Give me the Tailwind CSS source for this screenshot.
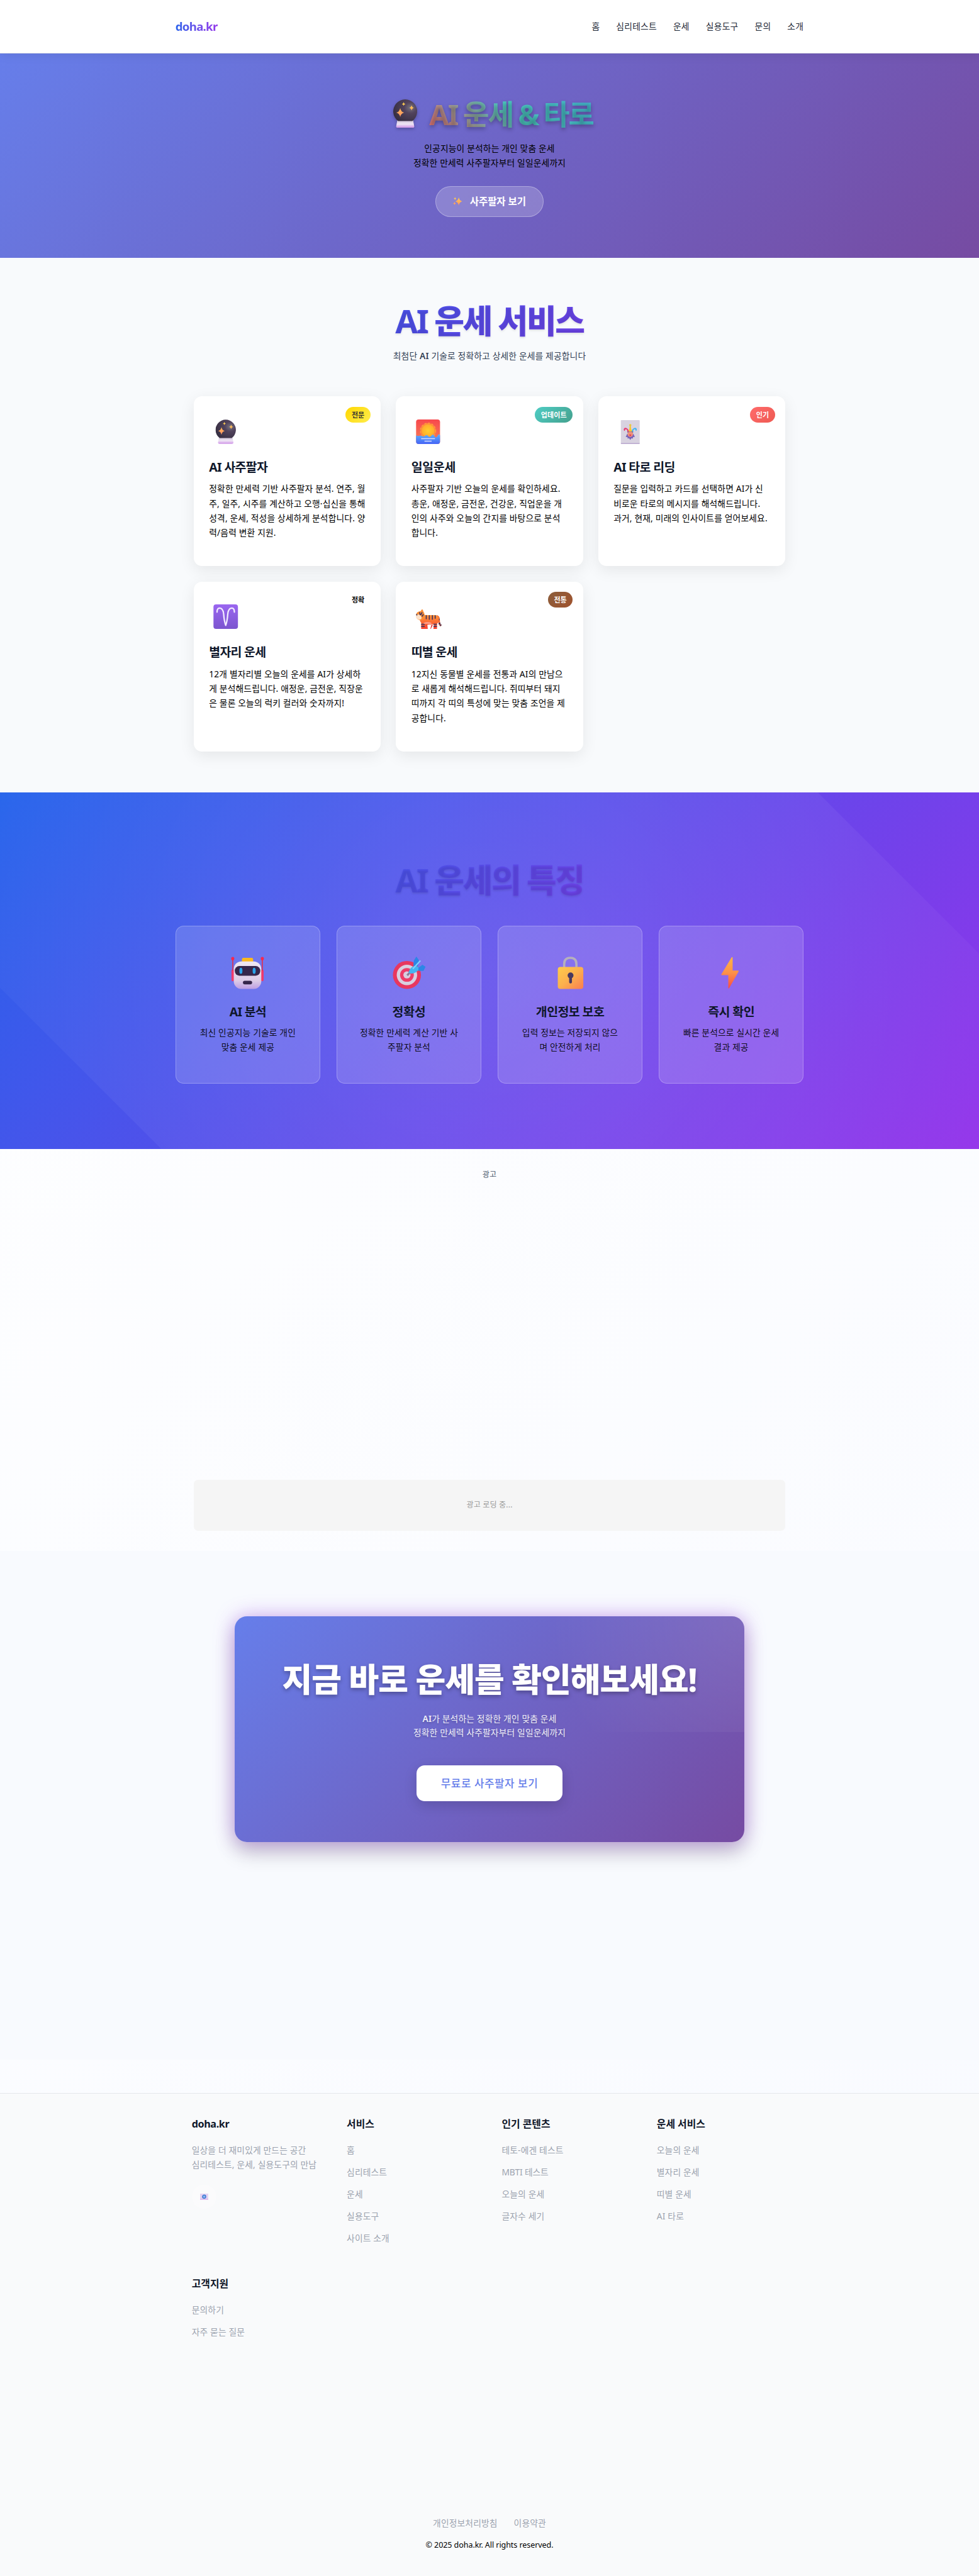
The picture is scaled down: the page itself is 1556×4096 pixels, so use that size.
<!DOCTYPE html>
<html lang="ko">
<head>
<meta charset="utf-8">
<title>AI 운세 &amp; 타로 - doha.kr</title>
<script src="https://cdn.jsdelivr.net/npm/@tailwindcss/browser@4"></script>
</head>
<body class="overflow-x-hidden bg-[#fafbfd]">
<svg width="0" height="0" class="absolute">
  <defs>
    <radialGradient id="orb" cx=".72" cy=".38" r=".75"><stop offset="0" stop-color="#77737f"/><stop offset=".35" stop-color="#51435c"/><stop offset="1" stop-color="#372f42"/></radialGradient>
    <linearGradient id="base" x1="0" y1="0" x2="0" y2="1"><stop offset="0" stop-color="#cfc4d8"/><stop offset=".5" stop-color="#efe6f5"/><stop offset="1" stop-color="#cd8fe6"/></linearGradient>
    <linearGradient id="gold" x1="0" y1="0" x2="0" y2="1"><stop offset="0" stop-color="#ffd34f"/><stop offset="1" stop-color="#ff9165"/></linearGradient>
    <linearGradient id="sky" x1="0" y1="0" x2="0" y2="1"><stop offset="0" stop-color="#f8484c"/><stop offset="1" stop-color="#f5835a"/></linearGradient>
    <linearGradient id="sea" x1="0" y1="0" x2="0" y2="1"><stop offset="0" stop-color="#5cb2ff"/><stop offset="1" stop-color="#4563f5"/></linearGradient>
    <radialGradient id="sun"><stop offset="0" stop-color="#ffce2e"/><stop offset="1" stop-color="#ffab2c"/></radialGradient>
    <linearGradient id="violet" x1="0" y1="0" x2="0" y2="1"><stop offset="0" stop-color="#9a66f0"/><stop offset="1" stop-color="#7c55cf"/></linearGradient>
    <linearGradient id="fur" x1="0" y1="0" x2="0" y2="1"><stop offset="0" stop-color="#ff9a3c"/><stop offset="1" stop-color="#f8402f"/></linearGradient>
    <linearGradient id="face" x1="0" y1="0" x2="0" y2="1"><stop offset="0" stop-color="#efe8f3"/><stop offset=".7" stop-color="#dccbe6"/><stop offset="1" stop-color="#bd9ee2"/></linearGradient>
    <linearGradient id="lock" x1="0" y1="0" x2="1" y2="1"><stop offset="0" stop-color="#ffcb4a"/><stop offset=".5" stop-color="#fbb04e"/><stop offset="1" stop-color="#fb7d50"/></linearGradient>
    <linearGradient id="bolt" x1="0" y1="0" x2="0" y2="1"><stop offset="0" stop-color="#ffb644"/><stop offset=".5" stop-color="#fd9149"/><stop offset="1" stop-color="#f84a45"/></linearGradient>
    <symbol id="crystal" viewBox="0 0 47 56">
      <path d="M8 41h31l2.3 12q0 3-3.500 3H9.200q-3.500 0-3.500-3z" fill="url(#base)"/>
      <path d="M9.500 42.500a23.500 23.500 0 1 1 28 0z" fill="url(#orb)"/>
      <path d="M13.700 17q1.300 7.500 7.700 9q-6.400 1.500-7.700 9q-1.300-7.500-7.700-9q6.400-1.500 7.700-9zM20.400 5.500q.6 3 3.400 3.600q-2.800.6-3.400 3.600q-.6-3-3.400-3.600q2.800-.6 3.400-3.600zM36 11.500q.8 4.300 4.600 5.200q-3.800.9-4.600 5.200q-.8-4.300-4.600-5.200q3.800-.9 4.600-5.200z" fill="url(#gold)"/>
    </symbol>
  </defs>
</svg>

<div class="[zoom:0.8104] w-full bg-[linear-gradient(135deg,#ffffff,#f8faff)] font-['Noto_Sans','Noto_Sans_CJK_KR',sans-serif] text-[17px] leading-[28.8px] tracking-[0.2px] text-black">

  <header class="relative z-10 h-[105px] border-b border-gray-200 bg-white shadow-[0_4px_20px_rgba(0,0,0,0.08)]">
    <div class="mx-auto flex h-full w-[1232px] items-center justify-between">
      <div class="bg-linear-to-r from-[#2563eb] to-[#9333ea] bg-clip-text pr-[2px] text-[23px] font-bold tracking-[-0.9px] text-transparent">doha.kr</div>
      <nav class="flex gap-8 whitespace-nowrap text-[#1f2937] tracking-[0.35px]">
        <a>홈</a><a>심리테스트</a><a>운세</a><a>실용도구</a><a>문의</a><a>소개</a>
      </nav>
    </div>
  </header>

  <section class="flex h-[401px] flex-col items-center bg-[linear-gradient(135deg,#667eea_0%,#764ba2_100%)] pt-[84.500px] text-center">
    <h1 class="flex h-[68px] items-center whitespace-nowrap bg-[linear-gradient(45deg,#ff6b6b_14%,#4ecdc4_60%,#45b7d1)] bg-clip-text pl-[15px] text-[56px] leading-[68px] font-bold tracking-[-2.4px] text-transparent [word-spacing:-2px] [text-shadow:0_4px_8px_rgba(0,0,0,0.3)]">
      <svg class="mr-[24px] h-[56px] w-[47px] drop-shadow-[0_3px_3px_rgba(0,0,0,0.25)]"><use href="#crystal"/></svg>AI 운세 &amp; 타로
    </h1>
    <p class="mt-[19px]">인공지능이 분석하는 개인 맞춤 운세<br>정확한 만세력 사주팔자부터 일일운세까지</p>
    <a class="mt-[31.100px] flex h-[61px] w-[212px] items-center justify-center rounded-full border border-white/30 bg-white/20 text-[19.200px] font-bold tracking-[-0.1px] text-white">
      <svg class="mr-[15px] size-[18px]" viewBox="0 0 18 18" fill="url(#gold)"><path d="M11.300 1q1.200 6.500 6.700 8q-5.500 1.500-6.700 8q-1.200-6.500-6.700-8q5.500-1.500 6.700-8zM4 .6q.5 2.300 2.600 2.900q-2.100.6-2.600 2.900q-.5-2.300-2.600-2.900q2.100-.6 2.600-2.900zM3 10q.5 2.500 2.900 3.100q-2.400.6-2.900 3.100q-.5-2.500-2.900-3.100q2.400-.6 2.900-3.100z"/></svg>
      사주팔자 보기
    </a>
  </section>

  <section class="h-[1049px] bg-[#f8fafc] pt-[85px]">
    <h2 class="mx-auto w-[1232px] bg-[linear-gradient(135deg,#2563eb,#9333ea)] bg-clip-text text-center text-[64px] leading-[77px] font-extrabold tracking-[-2.800px] text-transparent [word-spacing:-1px] [text-shadow:0_2px_4px_rgba(0,0,0,0.1)]"><span class="font-bold">AI</span> 운세 서비스</h2>
    <p class="mt-[15.500px] text-center text-[#334155]">최첨단 <span class="font-semibold">AI</span> 기술로 정확하고 상세한 운세를 제공합니다</p>
    <div class="mx-auto mt-[65.600px] grid w-[1160px] grid-cols-3 gap-[30px] whitespace-nowrap">

      <article class="relative h-[333px] rounded-2xl bg-white px-[30px] pt-[35px] shadow-[0_8px_30px_rgba(0,0,0,0.08)]">
        <span class="absolute top-5 right-5 rounded-full bg-[linear-gradient(135deg,#ffd700,#ffed4e)] px-3 text-[13.600px] leading-[31px] font-semibold tracking-normal text-[#333]">전문</span>
        <svg class="size-[66px]" viewBox="0 0 66 66"><use href="#crystal" x="13" y="10" width="40" height="48"/></svg>
        <h3 class="mt-[18px] text-[24px] leading-[38.400px] font-bold tracking-[-0.8px] text-[#0f172a]">AI 사주팔자</h3>
        <p class="mt-[9.300px]">정확한 만세력 기반 사주팔자 분석. 연주, 월<br>주, 일주, 시주를 계산하고 오행·십신을 통해<br>성격, 운세, 적성을 상세하게 분석합니다. 양<br>력/음력 변환 지원.</p>
      </article>

      <article class="relative h-[333px] rounded-2xl bg-white px-[30px] pt-[35px] shadow-[0_8px_30px_rgba(0,0,0,0.08)]">
        <span class="absolute top-5 right-5 rounded-full bg-[linear-gradient(135deg,#4ecdc4,#44a08d)] px-3 text-[13.600px] leading-[31px] font-semibold tracking-[0.1px] text-white">업데이트</span>
        <svg class="size-[66px]" viewBox="0 0 66 66">
          <rect x="9" y="10" width="47" height="48" rx="5" fill="url(#sky)"/>
          <circle cx="32.500" cy="32" r="15" fill="#ff8a3c" stroke="#ff9a3a" stroke-width="2" stroke-dasharray="4 3"/>
          <circle cx="32.500" cy="32" r="12.500" fill="url(#sun)"/>
          <path d="M9 41q3 2 6 1t6 .5 6-1 6 1 6-1 6 1 6-.5 5-1v12q0 5-5 5H14q-5 0-5-5z" fill="url(#sea)"/>
          <path d="M19 47.500h27M25.500 52.500h14" stroke="#d5dcff" stroke-width="2"/>
        </svg>
        <h3 class="mt-[18px] text-[24px] leading-[38.400px] font-bold tracking-[-0.4px] text-[#0f172a]">일일운세</h3>
        <p class="mt-[9.300px]">사주팔자 기반 오늘의 운세를 확인하세요.<br>총운, 애정운, 금전운, 건강운, 직업운을 개<br>인의 사주와 오늘의 간지를 바탕으로 분석<br>합니다.</p>
      </article>

      <article class="relative h-[333px] rounded-2xl bg-white px-[30px] pt-[35px] shadow-[0_8px_30px_rgba(0,0,0,0.08)]">
        <span class="absolute top-5 right-5 rounded-full bg-[linear-gradient(135deg,#ff6b6b,#ee5a52)] px-3 text-[13.600px] leading-[31px] font-semibold tracking-normal text-white">인기</span>
        <svg class="size-[66px]" viewBox="0 0 66 66">
          <rect x="14.500" y="11" width="37" height="47" rx="1.500" fill="#d8d2e0"/>
          <path d="M14.500 56h37v1q0 1-1.500 1H16q-1.500 0-1.500-1z" fill="#b9a7cf"/>
          <path d="M27 38h12l3 6-3.500.5-.5 3-2.500-1L33 50l-2.500-3.500-2.500 1-.5-3L24 44z" fill="#7a63b8"/>
          <path d="M27 35q1-5-2.500-6-2.500 0-2 3.500-3-.5-2-4.500 3-4 8 1l3 5z" fill="#e8386d"/>
          <path d="M39 35q-1-5 2.500-6 2.500 0 2 3.500 3-.5 2-4.500-3-4-8 1l-3 5z" fill="#3fb6f2"/>
          <path d="M29 34q3-5 3-12h2q0 7 3 12z" fill="#f7c52d"/>
          <circle cx="33" cy="21" r="2.200" fill="#e9c93f"/>
          <circle cx="33" cy="38.500" r="5.400" fill="#f0917a"/>
          <path d="M27.500 36q5.500-4 11 0v-2.500h-11z" fill="#6e59a5"/>
          <path d="M31 39.500h4q0 2.500-2 2.500t-2-2.500z" fill="#e3274f"/>
        </svg>
        <h3 class="mt-[18px] text-[24px] leading-[38.400px] font-bold tracking-[-0.8px] text-[#0f172a]">AI 타로 리딩</h3>
        <p class="mt-[9.300px]">질문을 입력하고 카드를 선택하면 AI가 신<br>비로운 타로의 메시지를 해석해드립니다.<br>과거, 현재, 미래의 인사이트를 얻어보세요.</p>
      </article>

      <article class="relative h-[334px] rounded-2xl bg-white px-[30px] pt-[35px] shadow-[0_8px_30px_rgba(0,0,0,0.08)]">
        <span class="absolute top-5 right-5 px-3 text-[13.600px] leading-[31px] font-semibold tracking-normal text-black">정확</span>
        <svg class="size-[66px]" viewBox="0 0 66 66">
          <rect x="9" y="10" width="48" height="48" rx="5" fill="url(#violet)"/>
          <path d="M16 25q0-8 5-8 7 0 8 12 1 14 4 22 3-8 4-22 1-12 8-12 5 0 5 8" fill="none" stroke="#f2ebff" stroke-width="2.800" stroke-linecap="round" stroke-linejoin="round"/>
        </svg>
        <h3 class="mt-[18px] text-[24px] leading-[38.400px] font-bold tracking-[-0.9px] text-[#0f172a]">별자리 운세</h3>
        <p class="mt-[9.300px]">12개 별자리별 오늘의 운세를 AI가 상세하<br>게 분석해드립니다. 애정운, 금전운, 직장운<br>은 물론 오늘의 럭키 컬러와 숫자까지!</p>
      </article>

      <article class="relative h-[334px] rounded-2xl bg-white px-[30px] pt-[35px] shadow-[0_8px_30px_rgba(0,0,0,0.08)]">
        <span class="absolute top-5 right-5 rounded-full bg-[linear-gradient(135deg,#8b5e3c,#a0522d)] px-3 text-[13.600px] leading-[31px] font-semibold tracking-normal text-white">전통</span>
        <svg class="size-[66px]" viewBox="0 0 66 66">
          <path d="M50 33q4 1 4 8 0 7 3 10" fill="none" stroke="#f0662f" stroke-width="3.500" stroke-linecap="round"/>
          <path d="M53.500 38v3M54.500 46l1 3M56.500 50l1.500 1.500" stroke="#43365f" stroke-width="3.500"/>
          <path d="M20 31q4-1 12 0h13q8 0 9 8 0 6-4 9v10h-7l1-9H33v9H19V46q-3-3-3-10z" fill="url(#fur)"/>
          <path d="M29 50h13l-4 8h-6z" fill="#e63a35"/>
          <path d="M31 50h8l-2 8h-5z" fill="#fff"/>
          <path d="M9 31q0-7 9-8l2-3q3-1 3 3 3 4 3 9 0 8-8 9-9 0-9-10z" fill="#fb8f35"/>
          <path d="M8.500 32q3-4 8-1 4 3 3 7-3 3-7 1-4-2-4-7z" fill="#fde1c8"/>
          <path d="M9 29.500q1.500-1.500 2.500 0v2q-2 1-2.500-2z" fill="#43365f"/>
          <path d="M16 26l1 4M20.500 26l-2 4M23 30l-2 3M29 32v6M35 32v7M41 32v7M46.500 32v5M20 49h5M20 53h5M44 49h5M44 53h5" stroke="#43365f" stroke-width="2.200" stroke-linecap="round"/>
          <path d="M24 46q8-3 15 0v2H24z" fill="#fb9a86"/>
        </svg>
        <h3 class="mt-[18px] text-[24px] leading-[38.400px] font-bold tracking-[-0.9px] text-[#0f172a]">띠별 운세</h3>
        <p class="mt-[9.300px]">12지신 동물별 운세를 전통과 AI의 만남으<br>로 새롭게 해석해드립니다. 쥐띠부터 돼지<br>띠까지 각 띠의 특성에 맞는 맞춤 조언을 제<br>공합니다.</p>
      </article>
    </div>
  </section>

  <section class="relative h-[699px] bg-[linear-gradient(135deg,#2563eb,#9333ea)] pt-[133px]">
    <!-- diagonal sheen behind the cards -->
    <div class="absolute inset-0 bg-[radial-gradient(circle_1300px_at_center,rgba(255,255,255,0.11),transparent)] [clip-path:polygon(0_0,1604px_0,100%_316px,100%_100%,316px_100%,0_383px)]"></div>
    <h2 class="relative mx-auto w-[1232px] bg-[linear-gradient(135deg,#2563eb,#9333ea)] bg-clip-text text-center text-[64px] leading-[77px] font-extrabold tracking-[-2.800px] text-transparent [word-spacing:-1px] [text-shadow:0_2px_4px_rgba(0,0,0,0.1)]"><span class="font-bold">AI</span> 운세의 특징</h2>
    <div class="relative mx-auto mt-[51px] grid w-[1232px] grid-cols-4 gap-8 text-center whitespace-nowrap text-black/90">

      <article class="flex h-[310px] flex-col items-center rounded-2xl border border-white/25 bg-white/15 pt-[60px]">
        <svg class="h-[64px] w-[80px]" viewBox="0 0 80 64">
          <path d="M11 28v18M69 28v18" stroke="#f0386b" stroke-width="5" stroke-linecap="round"/>
          <path d="M11 4v24M69 4v24" stroke="#e0304f" stroke-width="2"/>
          <ellipse cx="11" cy="4" rx="3" ry="3.500" fill="#f5284f"/><ellipse cx="69" cy="4" rx="3" ry="3.500" fill="#f5284f"/>
          <rect x="29" y="2.500" width="22" height="12" rx="3" fill="#fbb91f"/>
          <rect x="13" y="9.500" width="54" height="54" rx="15" fill="url(#face)"/>
          <rect x="15" y="18.500" width="50" height="19" rx="9" fill="#35264a"/>
          <ellipse cx="27" cy="28" rx="3" ry="6" fill="#29a3e8"/><ellipse cx="53" cy="28" rx="3" ry="6" fill="#29a3e8"/>
          <rect x="31" y="47.500" width="18" height="7" rx="3.500" fill="#35264a"/>
        </svg>
        <h3 class="mt-[25px] text-[24px] leading-[38.400px] font-bold tracking-[-0.9px] text-[#0f172a]">AI 분석</h3>
        <p class="mt-[6.300px]">최신 인공지능 기술로 개인<br>맞춤 운세 제공</p>
      </article>

      <article class="flex h-[310px] flex-col items-center rounded-2xl border border-white/25 bg-white/15 pt-[60px]">
        <svg class="h-[64px] w-[80px]" viewBox="0 0 80 64">
          <circle cx="35.500" cy="36" r="27.500" fill="#e8375f"/><circle cx="35.500" cy="36" r="20" fill="#d9cfe0"/><circle cx="35.500" cy="36" r="13.500" fill="#ee3d68"/><circle cx="35.500" cy="36" r="7" fill="#d9cfe0"/>
          <path d="M36 37l16-17" stroke="#8b7d95" stroke-width="4"/>
          <path d="M39 32q0-6 6-11l8-5 8 8-8 7q-7 4-14 1z" fill="#45b4f0"/>
          <path d="M48 18l1-10 5-8 5 7-2 12zM58 22l8-6 6 4-4 8-10 0z" fill="#2b87e6"/>
          <path d="M47 24L62 8" stroke="#7fd3fb" stroke-width="2.500"/>
        </svg>
        <h3 class="mt-[25px] text-[24px] leading-[38.400px] font-bold tracking-[-0.4px] text-[#0f172a]">정확성</h3>
        <p class="mt-[6.300px]">정확한 만세력 계산 기반 사<br>주팔자 분석</p>
      </article>

      <article class="flex h-[310px] flex-col items-center rounded-2xl border border-white/25 bg-white/15 pt-[60px]">
        <svg class="h-[64px] w-[80px]" viewBox="0 0 80 64">
          <path d="M28 24V15q0-12.500 12-12.500T52 15v9" fill="none" stroke="#b6b0bc" stroke-width="4.500"/>
          <rect x="15.500" y="20.500" width="50" height="43" rx="5" fill="url(#lock)"/>
          <circle cx="40.500" cy="37" r="5.800" fill="#47385f"/><path d="M40.500 38v12" stroke="#47385f" stroke-width="5.500" stroke-linecap="round"/>
        </svg>
        <h3 class="mt-[25px] text-[24px] leading-[38.400px] font-bold tracking-[-0.7px] text-[#0f172a]">개인정보 보호</h3>
        <p class="mt-[6.300px]">입력 정보는 저장되지 않으<br>며 안전하게 처리</p>
      </article>

      <article class="flex h-[310px] flex-col items-center rounded-2xl border border-white/25 bg-white/15 pt-[60px]">
        <svg class="h-[64px] w-[80px]" viewBox="0 0 80 64">
          <path d="M40.500 1.500q2-1.500 2 1V27.500H53q2 0 1 2L36 61.500q-2 2.500-2-.5V36.500H22q-2.500 0-1.300-2.300z" fill="url(#bolt)"/>
        </svg>
        <h3 class="mt-[25px] text-[24px] leading-[38.400px] font-bold tracking-[-0.7px] text-[#0f172a]">즉시 확인</h3>
        <p class="mt-[6.300px]">빠른 분석으로 실시간 운세<br>결과 제공</p>
      </article>
    </div>
  </section>

  <section class="mx-auto h-[789px] w-[1160px] pt-[40.600px] text-center text-[14.900px] leading-5">
    <div class="h-[608.400px] text-[#475569]">광고</div>
    <div class="flex h-[100px] items-center justify-center rounded-lg bg-[#f5f5f5] text-[#999]">광고 로딩 중...</div>
  </section>

  <section class="h-[998.500px] bg-[#f8fafe] pt-[128px]">
    <div class="mx-auto flex h-[443px] w-[1000px] flex-col items-center rounded-3xl bg-[radial-gradient(circle_383px_at_1000px_0px,rgba(255,255,255,0.1),transparent),linear-gradient(135deg,#667eea,#764ba2)] bg-[length:100%_227px,100%_100%] bg-no-repeat pt-[85.500px] text-center shadow-[0_0_40px_rgba(147,51,234,0.4),0_20px_40px_rgba(0,0,0,0.2)]">
      <h2 class="text-[64px] leading-[77px] font-extrabold tracking-[-1.200px] whitespace-nowrap text-white [text-shadow:0_4px_8px_rgba(0,0,0,0.3)]">지금 바로 운세를 확인해보세요!</h2>
      <p class="mt-[25px] leading-[27.500px] text-white/90 [text-shadow:0_2px_4px_rgba(0,0,0,0.2)]"><span class="font-semibold">AI</span>가 분석하는 정확한 개인 맞춤 운세<br>정확한 만세력 사주팔자부터 일일운세까지</p>
      <a class="mt-[50.500px] flex h-[70px] w-[287px] items-center justify-center rounded-2xl bg-white text-[20.800px] font-medium tracking-[0.7px] text-[#667eea] shadow-[0_8px_25px_rgba(0,0,0,0.15)]">무료로 사주팔자 보기</a>
    </div>
  </section>

  <footer class="mt-[65px] h-[949px] border-t border-gray-200 bg-[#f9fafb] pt-[45px] text-[#9ca3af]">
    <div class="ml-[376px] grid w-[1216px] grid-cols-4 gap-y-[60.600px] whitespace-nowrap">
      <div>
        <h4 class="mb-[21px] text-[20px] leading-[30px] font-bold tracking-[-0.5px] text-[#0f172a]">doha.kr</h4>
        <p>일상을 더 재미있게 만드는 공간<br>심리테스트, 운세, 실용도구의 만남</p>
        <div class="mt-[25px] flex size-12 items-center justify-center rounded-full bg-white/30">
          <svg class="h-[12px] w-[16px]" viewBox="0 0 16 12"><rect width="16" height="12" fill="#e6d3f1"/><path d="M0 10h16v2H0z" fill="#dcb6ec"/><circle cx="8" cy="6" r="3.200" fill="#8fb8ec" stroke="#3d78d6" stroke-width="1.800"/></svg>
        </div>
      </div>
      <div>
        <h4 class="mb-[21px] text-[19.600px] leading-[30px] font-bold tracking-normal text-[#0f172a]">서비스</h4>
        <ul class="flex flex-col gap-[14.500px]"><li>홈</li><li>심리테스트</li><li>운세</li><li>실용도구</li><li>사이트 소개</li></ul>
      </div>
      <div>
        <h4 class="mb-[21px] text-[19.600px] leading-[30px] font-bold tracking-normal text-[#0f172a]">인기 콘텐츠</h4>
        <ul class="flex flex-col gap-[14.500px]"><li>테토-에겐 테스트</li><li class="tracking-[-0.2px]">MBTI 테스트</li><li>오늘의 운세</li><li>글자수 세기</li></ul>
      </div>
      <div>
        <h4 class="mb-[21px] text-[19.600px] leading-[30px] font-bold tracking-normal text-[#0f172a]">운세 서비스</h4>
        <ul class="flex flex-col gap-[14.500px]"><li>오늘의 운세</li><li>별자리 운세</li><li>띠별 운세</li><li>AI 타로</li></ul>
      </div>
      <div>
        <h4 class="mb-[21px] text-[19.600px] leading-[30px] font-bold tracking-normal text-[#0f172a]">고객지원</h4>
        <ul class="flex flex-col gap-[14.500px]"><li>문의하기</li><li>자주 묻는 질문</li></ul>
      </div>
    </div>
    <div class="mt-[346px] flex justify-center gap-8"><a>개인정보처리방침</a><a>이용약관</a></div>
    <p class="mt-[14.500px] text-center text-[15.500px] tracking-[-0.1px] text-black">© 2025 doha.kr. All rights reserved.</p>
  </footer>
</div>
</body>
</html>
